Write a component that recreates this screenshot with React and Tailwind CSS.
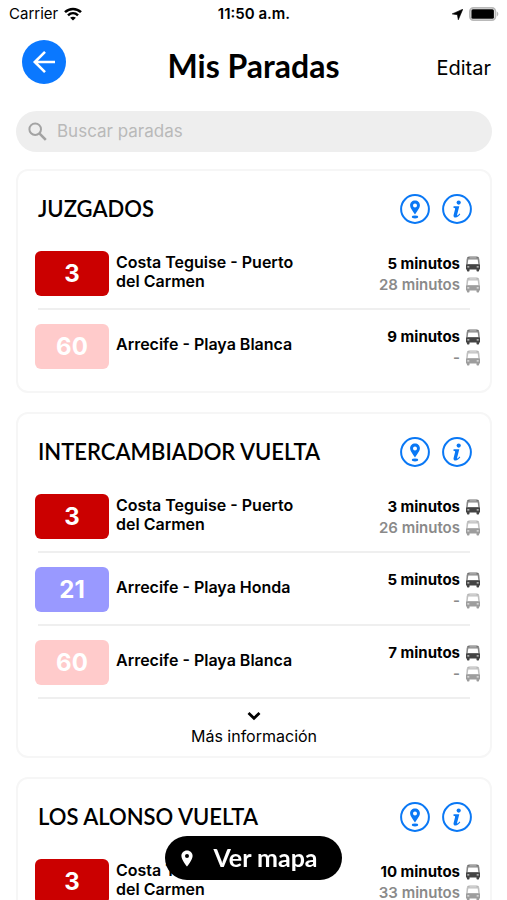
import React, { useState } from 'react';

const stops = [
  {
    name: 'JUZGADOS',
    lines: [
      { number: '3', color: 'bg-[#cb0000]', route: 'Costa Teguise - Puerto del Carmen', next: '5 minutos', later: '28 minutos' },
      { number: '60', color: 'bg-[#ffcbcb]', route: 'Arrecife - Playa Blanca', next: '9 minutos', later: '-' },
    ],
  },
  {
    name: 'INTERCAMBIADOR VUELTA',
    more: true,
    lines: [
      { number: '3', color: 'bg-[#cb0000]', route: 'Costa Teguise - Puerto del Carmen', next: '3 minutos', later: '26 minutos' },
      { number: '21', color: 'bg-[#9999ff]', route: 'Arrecife - Playa Honda', next: '5 minutos', later: '-' },
      { number: '60', color: 'bg-[#ffcbcb]', route: 'Arrecife - Playa Blanca', next: '7 minutos', later: '-' },
    ],
  },
  {
    name: 'LOS ALONSO VUELTA',
    lines: [
      { number: '3', color: 'bg-[#cb0000]', route: 'Costa Teguise - Puerto del Carmen', next: '10 minutos', later: '33 minutos' },
    ],
  },
];

function BusIcon({ className }) {
  return (
    <svg className={className} width="14" height="16" viewBox="0 0 14 16" fill="currentColor" aria-hidden="true">
      <path d="M3.200.5h7.600c1.500 0 2.200.8 2.300 2.200H.9C1 1.300 1.700.5 3.200.5z" opacity=".75" />
      <path d="M3.500 1.500h7v.8h-7z" fill="white" opacity=".7" />
      <path d="M.7 2.700h12.600l.5 5.800H.2z" opacity=".65" />
      <path d="M2.300 3.500h9.400l.6 4.600H1.700z" fill="white" />
      <path d="M.2 8.300h13.600c.1.300.2.700.2 1.100v4.100h-.9v1.200c0 .5-.3.800-.8.800h-1c-.5 0-.8-.3-.8-.8v-1.200h-7v1.200c0 .5-.3.800-.8.800h-1c-.5 0-.8-.3-.8-.8v-1.200H0V9.400c0-.4.100-.8.200-1.100z" />
      <path d="M1.300 10.200h2v1.300h-2zM10.700 10.200h2v1.300h-2z" fill="white" opacity=".75" />
    </svg>
  );
}

function StatusBar() {
  return (
    <div className="grid grid-cols-3 items-center h-7 pl-[9px] pr-2 text-[15px] leading-7">
      <div className="flex items-center gap-1.5">
        <span>Carrier</span>
        <svg width="18" height="14" viewBox="0 0 18 14" fill="none" stroke="black" strokeWidth="2.500" aria-hidden="true">
          <path d="M1 5.200C5.500.8 12.500.8 17 5.200" />
          <path d="M4 8.300c2.900-2.700 7.100-2.700 10 0" />
          <path d="M9 13.600 6.100 10.800c1.700-1.500 4.100-1.500 5.800 0z" fill="black" stroke="none" />
        </svg>
      </div>
      <div className="text-center font-semibold">11:50 a.m.</div>
      <div className="flex items-center justify-end gap-1.5">
        <svg width="11" height="11" viewBox="0 0 11 11" aria-hidden="true">
          <path d="M10.800.2 6.300 10.800 5.400 5.700.2 4.900z" stroke="black" strokeWidth=".6" />
        </svg>
        <svg width="30" height="14" viewBox="0 0 30 14" aria-hidden="true">
          <rect x=".9" y=".9" width="25.500" height="12.200" rx="3.500" fill="white" stroke="#b9b9b9" strokeWidth="1.800" />
          <rect x="2.400" y="2.300" width="22.500" height="9.400" rx="1.500" />
          <path d="M27.800 4.600c2 .8 2 4 0 4.800z" fill="#b9b9b9" />
        </svg>
      </div>
    </div>
  );
}

function LineRow({ line }) {
  return (
    <li>
      <div className="flex items-center pt-3.5 pb-3 pl-[17px] pr-2.5">
        <div className={`flex items-center justify-center w-[74px] h-[45px] shrink-0 rounded-md text-2xl font-bold text-white ${line.color}`}>
          {line.number}
        </div>
        <div className="ml-[7px] w-[200px] pb-1 text-base leading-[19px] font-semibold">{line.route}</div>
        <div className="ml-auto shrink-0 pt-0.5">
          <div className="flex items-center justify-end gap-1.5 h-[21px] text-[15px] font-bold">
            {line.next}
            <BusIcon className="text-[#444444]" />
          </div>
          <div className="flex items-center justify-end gap-1.5 h-[21px] text-[15px] font-semibold text-[#8a8a8a]">
            {line.later}
            <BusIcon className="text-[#9d9d9d]" />
          </div>
        </div>
      </div>
    </li>
  );
}

function StopCard({ stop }) {
  return (
    <section className="rounded-xl border-2 border-[#f6f6f6]">
      <div className="flex items-center pt-[22px] pl-5 pr-[18px]">
        <h2 className="font-['Lato'] text-[22px] leading-8 font-semibold">{stop.name}</h2>
        <div className="ml-auto flex gap-3 text-[#0a78f5]">
          <button type="button" aria-label="Ubicación" className="size-[30px]">
            <svg width="30" height="30" viewBox="0 0 30 30" fill="currentColor" aria-hidden="true">
              <circle cx="15" cy="15" r="13.900" fill="none" stroke="currentColor" strokeWidth="2" />
              <path fillRule="evenodd" d="M15 6.500c-2.900 0-4.900 2.100-4.900 4.800 0 2.900 2.700 5.500 4.900 9.300 2.200-3.800 4.900-6.400 4.900-9.300 0-2.700-2-4.800-4.900-4.800zm0 2.900a2 2 0 1 1 0 4 2 2 0 0 1 0-4z" />
              <ellipse cx="15" cy="23" rx="3.200" ry="1.400" />
            </svg>
          </button>
          <button type="button" aria-label="Información" className="size-[30px]">
            <svg width="30" height="30" viewBox="0 0 30 30" fill="currentColor" aria-hidden="true">
              <circle cx="15" cy="15" r="13.900" fill="none" stroke="currentColor" strokeWidth="2" />
              <circle cx="16.700" cy="8.600" r="2.100" />
              <path d="M11.600 12.300h5.700l-2.200 8.500c-.2.900.5.900 1.100.3l1.300-1.500.8.700c-1.400 1.900-2.900 3.200-4.800 3.200-1.600 0-2.300-1.100-1.900-2.600l1.500-5.900c.1-.6-.1-.9-.7-1l-1-.2z" />
            </svg>
          </button>
        </div>
      </div>
      <ul className="pt-3">
        {stop.lines.map((line, i) => (
          <React.Fragment key={line.number}>
            <LineRow line={line} />
            {(i < stop.lines.length - 1 || stop.more) && (
              <li aria-hidden="true" className="mx-5 h-0.5 bg-[#efefef]" />
            )}
          </React.Fragment>
        ))}
      </ul>
      {stop.more ? (
        <button type="button" className="flex flex-col items-center w-full pt-3 pb-1.5">
          <svg width="14" height="10" viewBox="0 0 14 10" fill="none" stroke="black" strokeWidth="2.800" aria-hidden="true">
            <path d="M1.500 2 7 7.200 12.500 2" />
          </svg>
          <span className="pt-0.5 text-base leading-[27px]">Más información</span>
        </button>
      ) : (
        <div className="h-2.5" />
      )}
    </section>
  );
}

export default function App() {
  const [search, setSearch] = useState('');

  const filtered = stops.filter(stop => stop.name.toLowerCase().includes(search.toLowerCase()));

  return (
    <div className="flex flex-col h-screen overflow-hidden bg-white text-black font-['Inter',sans-serif]">
      <StatusBar />
      <header className="grid grid-cols-[1fr_auto_1fr] items-center pt-3 px-4">
        <button type="button" aria-label="Volver" className="flex items-center justify-center size-11 ml-1.5 rounded-full bg-[#0a78ff]">
          <svg width="24" height="24" viewBox="0 0 24 24" fill="none" stroke="white" strokeWidth="2.600" aria-hidden="true">
            <path d="M23 12H3M13 1.800 2.800 12 13 22.200" />
          </svg>
        </button>
        <h1 className="pt-2 font-['Lato'] text-[32px] leading-9 font-bold">Mis Paradas</h1>
        <button type="button" className="justify-self-end pt-3 text-xl leading-6">Editar</button>
      </header>
      <div className="pl-4 pr-[15px] pt-[27px] pb-[17px]">
        <label className="flex items-center h-[41px] rounded-full bg-[#eeeeee] pl-3">
          <svg width="19" height="19" viewBox="0 0 19 19" fill="none" stroke="#a3a3a3" strokeWidth="2" aria-hidden="true">
            <circle cx="7.200" cy="7.200" r="5.800" />
            <path d="m11.600 11.600 6.200 6.200" strokeWidth="2.600" />
          </svg>
          <input
            className="flex-1 ml-2.5 bg-transparent text-[17px] outline-none placeholder:text-[#b9b9b9]"
            type="text"
            aria-label="Buscar paradas"
            value={search}
            onChange={(e) => setSearch(e.target.value)}
            placeholder="Buscar paradas"
          />
        </label>
      </div>
      <main className="flex-1 min-h-0 overflow-y-auto pl-4 pr-[15px] pb-20 space-y-[19px] [scrollbar-width:none]">
        {filtered.map(stop => (
          <StopCard key={stop.name} stop={stop} />
        ))}
      </main>
      {/* floating map button */}
      <div className="fixed inset-x-0 bottom-5 flex justify-center">
        <button type="button" className="flex items-center h-11 pl-4 pr-6 rounded-full bg-black text-white">
          <svg width="12" height="17" viewBox="0 0 12 17" fill="white" aria-hidden="true">
            <path fillRule="evenodd" d="M6 .5C2.800.5.400 2.900.400 6c0 4 5.600 10.500 5.600 10.500S11.600 10 11.600 6C11.600 2.900 9.200.5 6 .5zM6 4a2 2 0 1 1 0 4 2 2 0 0 1 0-4z" />
          </svg>
          <span className="ml-5 font-['Lato'] text-[25px] font-bold">Ver mapa</span>
        </button>
      </div>
    </div>
  );
}
